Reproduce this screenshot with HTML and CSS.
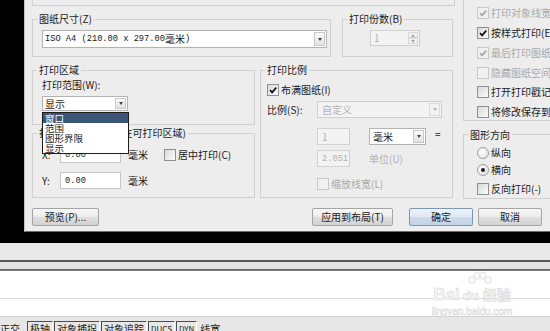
FILE: index.html
```html
<!DOCTYPE html>
<html lang="zh-CN">
<head>
    <meta charset="UTF-8">
    <title>打印 - 模型</title>
    <link rel="stylesheet" href="styles.css">
</head>
<body>
<div class="screen">
    <div class="workspace">
        <div class="dialog">
            <div class="dialog-body">
                <!-- left part of the dialog -->
                <div class="main-col">
                    <div class="group-tail"></div>

                    <div class="row-top">
                        <fieldset class="group paper">
                            <legend>图纸尺寸(Z)</legend>
                            <div class="combo combo-paper">
                                <span class="combo-text"><span class="mono">ISO A4 (210.00 x 297.00 </span>毫米<span class="mono">)</span></span>
                                <span class="combo-btn"><i class="arrow-down"></i></span>
                            </div>
                        </fieldset>
                        <fieldset class="group copies">
                            <legend>打印份数(B)</legend>
                            <div class="spin">
                                <span class="spin-text">1</span>
                                <span class="spin-btns">
                                    <span class="spin-btn"><i class="arrow-up"></i></span>
                                    <span class="spin-btn"><i class="arrow-down"></i></span>
                                </span>
                            </div>
                        </fieldset>
                    </div>

                    <div class="row-mid">
                        <div class="stack">
                            <fieldset class="group area">
                                <legend>打印区域</legend>
                                <div class="area-label">打印范围(W):</div>
                                <div class="combo combo-area">
                                    <span class="combo-text">显示</span>
                                    <span class="combo-btn"><i class="arrow-down"></i></span>
                                    <ul class="dropdown">
                                        <li class="is-selected">窗口</li>
                                        <li>范围</li>
                                        <li>图形界限</li>
                                        <li>显示</li>
                                    </ul>
                                </div>
                            </fieldset>

                            <fieldset class="group offset">
                                <legend>打印偏移(原点设置在可打印区域)</legend>
                                <div class="offset-row">
                                    <span class="axis">X:</span>
                                    <span class="field"><span class="mono">0.00</span></span>
                                    <span class="unit">毫米</span>
                                    <span class="check check-center"><span class="box"></span>居中打印(C)</span>
                                </div>
                                <div class="offset-row offset-row-y">
                                    <span class="axis">Y:</span>
                                    <span class="field"><span class="mono">0.00</span></span>
                                    <span class="unit">毫米</span>
                                </div>
                            </fieldset>
                        </div>

                        <fieldset class="group scale">
                            <legend>打印比例</legend>
                            <div class="check scale-fit">
                                <span class="box"><svg viewBox="0 0 10 10"><path d="M2 5.2 L4.2 7.4 L8.2 2.6"/></svg></span>布满图纸(I)
                            </div>
                            <div class="scale-row">
                                <span class="scale-label">比例(S):</span>
                                <div class="combo combo-scale is-disabled">
                                    <span class="combo-text">自定义</span>
                                    <span class="combo-btn"><i class="arrow-down"></i></span>
                                </div>
                            </div>
                            <div class="scale-row scale-indent scale-first">
                                <span class="field is-disabled">1</span>
                                <div class="combo combo-unit">
                                    <span class="combo-text">毫米</span>
                                    <span class="combo-btn"><i class="arrow-down"></i></span>
                                </div>
                                <span class="equals">=</span>
                            </div>
                            <div class="scale-row scale-indent scale-second">
                                <span class="field is-disabled"><span class="mono">2.051</span></span>
                                <span class="unit-text">单位(U)</span>
                            </div>
                            <div class="check scale-lw is-disabled"><span class="box"></span>缩放线宽(L)</div>
                        </fieldset>
                    </div>
                </div>

                <!-- right part of the dialog, cut by the window edge -->
                <div class="side-col">
                    <div class="options">
                        <div class="check is-disabled"><span class="box"></span>打印样式表</div>
                        <div class="check is-disabled"><span class="box"><svg viewBox="0 0 10 10"><path d="M2 5.2 L4.2 7.4 L8.2 2.6"/></svg></span>打印对象线宽</div>
                        <div class="check"><span class="box"><svg viewBox="0 0 10 10"><path d="M2 5.2 L4.2 7.4 L8.2 2.6"/></svg></span>按样式打印(E)</div>
                        <div class="check is-disabled"><span class="box"><svg viewBox="0 0 10 10"><path d="M2 5.2 L4.2 7.4 L8.2 2.6"/></svg></span>最后打印图纸空间</div>
                        <div class="check is-disabled"><span class="box"></span>隐藏图纸空间对象</div>
                        <div class="check"><span class="box"></span>打开打印戳记</div>
                        <div class="check"><span class="box"></span>将修改保存到布局</div>
                    </div>
                    <fieldset class="group orient">
                        <legend>图形方向</legend>
                        <div class="radio-row"><span class="radio"></span>纵向</div>
                        <div class="radio-row radio-second"><span class="radio is-on"></span>横向</div>
                        <div class="check orient-flip"><span class="box"></span>反向打印(-)</div>
                    </fieldset>
                </div>
            </div>

            <div class="buttons">
                <span class="btn btn-preview">预览(P)...</span>
                <span class="btn btn-apply">应用到布局(T)</span>
                <span class="btn btn-ok">确定</span>
                <span class="btn btn-cancel">取消</span>
            </div>
        </div>
    </div>

    <div class="lower">
        <div class="band-a"></div>
        <div class="rule-dark"></div>
        <div class="band-b"></div>
        <div class="rule-mid"></div>
        <div class="cmd-line"></div>
        <div class="cmd-input"></div>
        <div class="status">
            <span class="stat stat-first">正交</span>
            <span class="stat on">极轴</span>
            <span class="stat on">对象捕捉</span>
            <span class="stat on">对象追踪</span>
            <span class="stat on latin">DUCS</span>
            <span class="stat on latin">DYN</span>
            <span class="stat">线宽</span>
        </div>

        <!-- watermark over the command area -->
        <div class="wm">
            <svg class="wm-paw" viewBox="0 0 30 18">
                <ellipse cx="8" cy="9" rx="3" ry="3.6"/>
                <ellipse cx="13" cy="4.5" rx="3" ry="3.6"/>
                <ellipse cx="19" cy="4.5" rx="3" ry="3.6"/>
                <ellipse cx="24" cy="9" rx="3" ry="3.6"/>
            </svg>
            <div class="wm-main"><span class="wm-bai">Bai</span><span class="wm-du">du</span><span class="wm-jy">经验</span></div>
            <div class="wm-url">jingyan.baidu.com</div>
        </div>
    </div>
</div>
</body>
</html>
```

FILE: styles.css
```css
* {
    box-sizing: border-box;
}
body {
    margin: 0;
    width: 550px;
    height: 331px;
    overflow: hidden;
    background: #fff;
    font-family: "Noto Sans CJK SC", sans-serif;
    font-size: 10px;
    line-height: 12px;
    color: #1a1a1a;
}
.screen {
    display: flex;
    flex-direction: column;
    height: 331px;
}
.mono {
    font-family: "Liberation Mono", monospace;
    font-size: 8.7px;
}

/* dialog */
.workspace {
    height: 243px;
    background: #000;
    padding: 0 0 11px 24px;
    display: flex;
}
.dialog {
    width: 526px;
    height: 232px;
    background: #ededed;
    border-left: 1px solid #c4c4c4;
    border-bottom: 1px solid #6d6d6d;
    padding-left: 7px;
    overflow: hidden;
}
.dialog-body {
    display: flex;
    height: 199px;
}
.main-col {
    width: 423px;
    flex-shrink: 0;
    display: flex;
    flex-direction: column;
}
.side-col {
    width: 100px;
    flex-shrink: 0;
    margin-left: 8px;
    display: flex;
    flex-direction: column;
}
.group {
    margin: 0;
    padding: 0;
    min-width: 0;
    border: 1px solid #d0d0d0;
}
.group legend {
    padding: 0 2px;
    margin-left: 4px;
    line-height: 12px;
    white-space: nowrap;
}
.group-tail {
    height: 6px;
    border: 1px solid #d0d0d0;
    border-top: 0;
}
.row-top {
    display: flex;
    gap: 11px;
    margin-top: 7px;
}
.paper {
    width: 299px;
    padding: 5px 3px 8px 9px;
}
.paper legend {
    margin-left: -5px;
}
.copies {
    width: 111px;
    padding-top: 5px;
}

/* combo boxes and fields */
.combo {
    position: relative;
    display: flex;
    align-items: stretch;
    height: 18px;
    background: #fff;
    border: 1px solid #b3b3b3;
}
.combo-text {
    flex: 1;
    display: flex;
    align-items: center;
    padding-left: 2px;
    white-space: nowrap;
    overflow: hidden;
}
.combo-btn {
    width: 11px;
    margin: 1px;
    border: 1px solid #c8c8c8;
    background: linear-gradient(#fafafa, #e2e2e2);
    display: flex;
    align-items: center;
    justify-content: center;
}
.arrow-down {
    width: 0;
    height: 0;
    border-left: 2.5px solid transparent;
    border-right: 2.5px solid transparent;
    border-top: 3px solid #404040;
}
.arrow-up {
    width: 0;
    height: 0;
    border-left: 2.5px solid transparent;
    border-right: 2.5px solid transparent;
    border-bottom: 3px solid #a8a8a8;
}
.combo.is-disabled {
    background: #f3f3f3;
    border-color: #cfcfcf;
    color: #b2b2b2;
}
.combo.is-disabled .combo-text {
    padding-left: 4px;
}
.combo.is-disabled .combo-btn {
    border-color: #dadada;
    background: #f2f2f2;
}
.combo.is-disabled .arrow-down {
    border-top-color: #b4b4b4;
}
.spin {
    display: flex;
    margin-left: 27px;
    width: 50px;
    height: 16px;
    background: #f3f3f3;
    border: 1px solid #cfcfcf;
    color: #b2b2b2;
}
.spin-text {
    flex: 1;
    padding-left: 3px;
    line-height: 14px;
}
.spin-btns {
    width: 10px;
    display: flex;
    flex-direction: column;
    margin: 1px;
}
.spin-btn {
    flex: 1;
    border: 1px solid #d8d8d8;
    background: #f2f2f2;
    display: flex;
    align-items: center;
    justify-content: center;
}
.spin-btn .arrow-down {
    border-top-color: #a8a8a8;
}
.field {
    display: flex;
    align-items: center;
    height: 17px;
    background: #fff;
    border: 1px solid #c6c6c6;
    padding-left: 4px;
}
.field.is-disabled {
    background: #f3f3f3;
    border-color: #d2d2d2;
    color: #b2b2b2;
}

/* print area */
.row-mid {
    display: flex;
    gap: 5px;
    margin-top: 7px;
}
.stack {
    width: 223px;
    display: flex;
    flex-direction: column;
}
.area {
    padding: 3px 0 13px 9px;
    position: relative;
    z-index: 2;
}
.area legend,
.offset legend {
    margin-left: -5px;
}
.combo-area {
    width: 86px;
    height: 15px;
    margin-top: 5px;
}
.dropdown {
    position: absolute;
    left: -1px;
    top: calc(100% + 2px);
    width: 87px;
    margin: 0;
    padding: 0;
    list-style: none;
    background: #fff;
    border: 1px solid #1c1c1c;
}
.dropdown li {
    height: 10px;
    line-height: 10px;
    font-size: 9.5px;
    padding-left: 2px;
    white-space: nowrap;
}
.dropdown li.is-selected {
    background: #3c5579;
    color: #fff;
}
.offset {
    margin-top: 2px;
    padding: 7px 0 8px 9px;
}
.offset-row {
    display: flex;
    align-items: center;
    height: 17px;
}
.offset-row-y {
    margin-top: 9px;
}
.axis {
    width: 18px;
}
.offset-row .field {
    width: 61px;
}
.unit {
    margin-left: 7px;
}
.check-center {
    margin-left: 16px;
}

/* checkboxes and radios */
.check {
    display: flex;
    align-items: center;
    height: 13px;
    white-space: nowrap;
}
.box {
    width: 12px;
    height: 12px;
    flex-shrink: 0;
    margin-right: 2px;
    border: 1px solid #8f9090;
    background: linear-gradient(135deg, #d9d9d9, #fbfbfb);
    display: flex;
    align-items: center;
    justify-content: center;
}
.box svg {
    width: 10px;
    height: 10px;
    fill: none;
    stroke: #111;
    stroke-width: 1.7;
}
.check.is-disabled {
    color: #a9a9a9;
}
.check.is-disabled .box {
    border-color: #c8c8c8;
    background: #f1f1f1;
}
.check.is-disabled .box svg {
    stroke: #a6a6a6;
}
.radio-row {
    display: flex;
    align-items: center;
    height: 12px;
}
.radio {
    width: 12px;
    height: 12px;
    margin-right: 2px;
    border-radius: 50%;
    border: 1px solid #a0a0a0;
    background: radial-gradient(circle at 40% 40%, #fdfdfd, #dcdcdc);
    display: flex;
    align-items: center;
    justify-content: center;
}
.radio.is-on::after {
    content: "";
    width: 4px;
    height: 4px;
    border-radius: 50%;
    background: #1a1a1a;
}

/* plot scale */
.scale {
    width: 193px;
    padding: 7px 0 0 6px;
}
.scale legend {
    margin-left: -2px;
}
.scale-row {
    display: flex;
    align-items: center;
    height: 17px;
    margin-top: 5px;
}
.scale-label {
    width: 50px;
}
.combo-scale {
    width: 125px;
    height: 17px;
}
.scale-indent {
    margin-left: 50px;
}
.scale-first {
    margin-top: 10px;
}
.scale-indent .field {
    width: 33px;
}
.combo-unit {
    width: 57px;
    height: 17px;
    margin-left: 19px;
}
.combo-unit .combo-text {
    padding-left: 3px;
}
.equals {
    margin-left: 9px;
    margin-top: -5px;
}
.unit-text {
    margin-left: 19px;
    color: #b2b2b2;
}
.scale-lw {
    margin: 10px 0 0 50px;
}

/* right column */
.options {
    margin-top: -13px;
    padding: 0 0 1px 13px;
    border: 1px solid #d0d0d0;
    border-top: 0;
    border-right: 0;
    display: flex;
    flex-direction: column;
    gap: 6.8px;
}
.orient {
    flex: 1;
    margin-top: 8px;
    padding: 6px 0 0 13px;
    border-right: 0;
}
.orient legend {
    margin-left: -9px;
}
.radio-second {
    margin-top: 5px;
}
.orient-flip {
    margin-top: 7px;
}

/* dialog buttons */
.buttons {
    display: flex;
    margin-top: 9px;
    padding-right: 8px;
}
.btn {
    height: 18px;
    display: flex;
    align-items: center;
    justify-content: center;
    border: 1px solid #a5a5a5;
    border-radius: 2px;
    background: linear-gradient(#f7f7f7, #ececec 50%, #dedede 51%, #d3d3d3);
    white-space: nowrap;
}
.btn-preview {
    width: 67px;
}
.btn-apply {
    width: 81px;
    margin-left: auto;
}
.btn-ok {
    width: 64px;
    margin-left: 16px;
    border-color: #7b97b5;
    background: linear-gradient(#eef4fa, #dfe9f3 50%, #cddcec 51%, #c1d3e6);
}
.btn-cancel {
    width: 64px;
    margin-left: 5px;
}

/* command area and status bar */
.lower {
    position: relative;
    height: 88px;
    display: flex;
    flex-direction: column;
}
.band-a {
    height: 17px;
    background: #e9e9e9;
}
.rule-dark {
    height: 2px;
    background: #585858;
}
.band-b {
    height: 7px;
    background: #e4e4e4;
}
.rule-mid {
    height: 2px;
    background: linear-gradient(#5a5a5a, #8a8a8a);
}
.cmd-line {
    height: 28px;
    background: #fff;
    border-bottom: 1px solid #d9d9d9;
}
.cmd-input {
    height: 17px;
    background: #fff;
}
.status {
    height: 15px;
    background: #e7e7e7;
    border-top: 1px solid #cfcfcf;
    padding-top: 3.5px;
    display: flex;
    gap: 1px;
}
.stat {
    height: 13px;
    padding: 0 2px;
    line-height: 13px;
    white-space: nowrap;
    border-top: 1px solid transparent;
}
.stat.on {
    border-top: 1px solid #4d4d4d;
    border-left: 1px solid #4d4d4d;
    border-right: 1px solid #ffffff;
}
.stat-first {
    margin-left: -2px;
    margin-right: 4px;
}
.stat.latin {
    font-size: 8px;
}
.wm {
    position: absolute;
    left: 420px;
    top: 28px;
    width: 104px;
    display: flex;
    flex-direction: column;
    align-items: center;
    color: #f8f8f8;
    -webkit-text-stroke: 0.6px #d8d8d8;
}
.wm-paw {
    width: 30px;
    height: 18px;
    margin-left: 14px;
    fill: #fafafa;
    stroke: #d8d8d8;
    stroke-width: 0.8;
}
.wm-main {
    display: flex;
    align-items: baseline;
    margin-top: -3px;
    font-family: "Liberation Sans", sans-serif;
    font-weight: bold;
    font-size: 17px;
    line-height: 17px;
}
.wm-du {
    font-size: 13px;
    margin: 0 4px 0 3px;
}
.wm-jy {
    font-family: "Noto Sans CJK SC", sans-serif;
    font-size: 14px;
}
.wm-url {
    margin-top: 2px;
    font-family: "Liberation Sans", sans-serif;
    font-size: 10px;
    line-height: 11px;
    -webkit-text-stroke: 0.5px #d8d8d8;
}
```
